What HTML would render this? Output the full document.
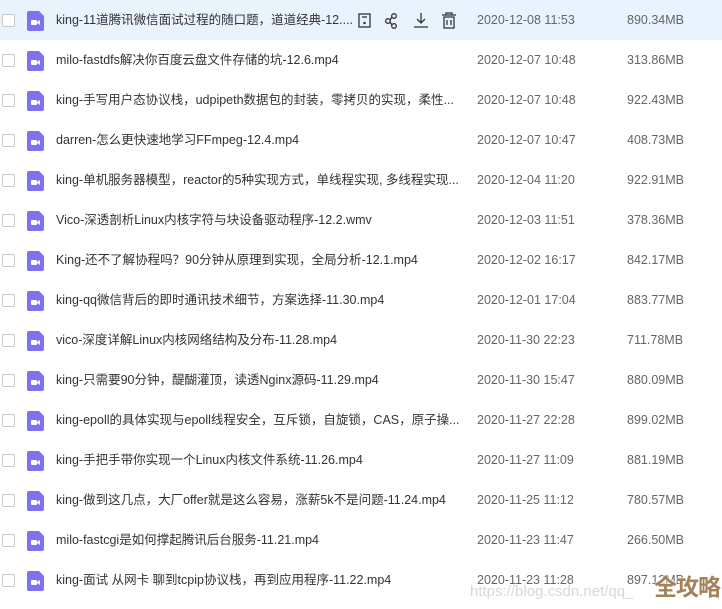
<!DOCTYPE html>
<html><head><meta charset="utf-8"><style>
html,body{margin:0;padding:0;background:#fff;width:722px;height:609px;overflow:hidden;position:relative}
body{font-family:"Liberation Sans","Noto Sans CJK SC",sans-serif;font-size:12.5px;color:#424e67}
.row{position:absolute;left:0;width:722px;height:40px;line-height:40px}
.row.hl{background:#e9f3fd}
.cb{position:absolute;left:2px;top:14px;width:11px;height:11px;border:1px solid #c8c8c8;border-radius:2px;background:#fff}
.ic{position:absolute;left:27px;top:11px;width:17px;height:20px}
.name{position:absolute;left:56px;top:0;height:40px;line-height:40px;white-space:nowrap;color:#333}
.date{position:absolute;left:477px;top:0;height:40px;line-height:40px;color:#666;white-space:nowrap}
.size{position:absolute;left:627px;top:0;height:40px;line-height:40px;color:#666;white-space:nowrap}
.ops{position:absolute;left:357px;top:11px}
</style></head><body>
<div class="row hl" style="top:0">
<div class="cb"></div>
<svg class="ic" viewBox="0 0 17 20"><path d="M2 0h10l5 5v13a2 2 0 0 1-2 2H2a2 2 0 0 1-2-2V2a2 2 0 0 1 2-2z" fill="#7f72f0"/><rect x="4" y="9" width="6" height="5" rx="1" fill="#fff"/><path d="M10 11l3-2v5l-3-2z" fill="#fff"/></svg>
<div class="name">king-11道腾讯微信面试过程的随口题，道道经典-12....</div>
<svg class="ops" width="100" height="20" viewBox="0 0 100 20" fill="none" stroke="#333" stroke-width="1.3">
<rect x="2" y="3" width="11" height="13"/><path d="M5 6h5"/><circle cx="7.5" cy="12" r="0.6" fill="#333"/>
<circle cx="31" cy="10" r="2.3"/><circle cx="37" cy="5" r="2.3"/><circle cx="37" cy="15" r="2.3"/><path d="M33 9l2-3M33 11l2 3"/>
<path d="M64 2v10M60 8l4 4 4-4M57 16h14"/>
<path d="M85 4h14M89 4V2h6v2M87 6h10v11H87zM90 9v5M94 9v5"/>
</svg>
<div class="date">2020-12-08 11:53</div><div class="size">890.34MB</div>
</div>
<div class="row" style="top:40px"><div class="cb"></div><svg class="ic" viewBox="0 0 17 20"><path d="M2 0h10l5 5v13a2 2 0 0 1-2 2H2a2 2 0 0 1-2-2V2a2 2 0 0 1 2-2z" fill="#7f72f0"/><rect x="4" y="9" width="6" height="5" rx="1" fill="#fff"/><path d="M10 11l3-2v5l-3-2z" fill="#fff"/></svg><div class="name">milo-fastdfs解决你百度云盘文件存储的坑-12.6.mp4</div><div class="date">2020-12-07 10:48</div><div class="size">313.86MB</div></div>
<div class="row" style="top:80px"><div class="cb"></div><svg class="ic" viewBox="0 0 17 20"><path d="M2 0h10l5 5v13a2 2 0 0 1-2 2H2a2 2 0 0 1-2-2V2a2 2 0 0 1 2-2z" fill="#7f72f0"/><rect x="4" y="9" width="6" height="5" rx="1" fill="#fff"/><path d="M10 11l3-2v5l-3-2z" fill="#fff"/></svg><div class="name">king-手写用户态协议栈，udpipeth数据包的封装，零拷贝的实现，柔性...</div><div class="date">2020-12-07 10:48</div><div class="size">922.43MB</div></div>
<div class="row" style="top:120px"><div class="cb"></div><svg class="ic" viewBox="0 0 17 20"><path d="M2 0h10l5 5v13a2 2 0 0 1-2 2H2a2 2 0 0 1-2-2V2a2 2 0 0 1 2-2z" fill="#7f72f0"/><rect x="4" y="9" width="6" height="5" rx="1" fill="#fff"/><path d="M10 11l3-2v5l-3-2z" fill="#fff"/></svg><div class="name">darren-怎么更快速地学习FFmpeg-12.4.mp4</div><div class="date">2020-12-07 10:47</div><div class="size">408.73MB</div></div>
<div class="row" style="top:160px"><div class="cb"></div><svg class="ic" viewBox="0 0 17 20"><path d="M2 0h10l5 5v13a2 2 0 0 1-2 2H2a2 2 0 0 1-2-2V2a2 2 0 0 1 2-2z" fill="#7f72f0"/><rect x="4" y="9" width="6" height="5" rx="1" fill="#fff"/><path d="M10 11l3-2v5l-3-2z" fill="#fff"/></svg><div class="name">king-单机服务器模型，reactor的5种实现方式，单线程实现, 多线程实现...</div><div class="date">2020-12-04 11:20</div><div class="size">922.91MB</div></div>
<div class="row" style="top:200px"><div class="cb"></div><svg class="ic" viewBox="0 0 17 20"><path d="M2 0h10l5 5v13a2 2 0 0 1-2 2H2a2 2 0 0 1-2-2V2a2 2 0 0 1 2-2z" fill="#7f72f0"/><rect x="4" y="9" width="6" height="5" rx="1" fill="#fff"/><path d="M10 11l3-2v5l-3-2z" fill="#fff"/></svg><div class="name">Vico-深透剖析Linux内核字符与块设备驱动程序-12.2.wmv</div><div class="date">2020-12-03 11:51</div><div class="size">378.36MB</div></div>
<div class="row" style="top:240px"><div class="cb"></div><svg class="ic" viewBox="0 0 17 20"><path d="M2 0h10l5 5v13a2 2 0 0 1-2 2H2a2 2 0 0 1-2-2V2a2 2 0 0 1 2-2z" fill="#7f72f0"/><rect x="4" y="9" width="6" height="5" rx="1" fill="#fff"/><path d="M10 11l3-2v5l-3-2z" fill="#fff"/></svg><div class="name">King-还不了解协程吗？90分钟从原理到实现，全局分析-12.1.mp4</div><div class="date">2020-12-02 16:17</div><div class="size">842.17MB</div></div>
<div class="row" style="top:280px"><div class="cb"></div><svg class="ic" viewBox="0 0 17 20"><path d="M2 0h10l5 5v13a2 2 0 0 1-2 2H2a2 2 0 0 1-2-2V2a2 2 0 0 1 2-2z" fill="#7f72f0"/><rect x="4" y="9" width="6" height="5" rx="1" fill="#fff"/><path d="M10 11l3-2v5l-3-2z" fill="#fff"/></svg><div class="name">king-qq微信背后的即时通讯技术细节，方案选择-11.30.mp4</div><div class="date">2020-12-01 17:04</div><div class="size">883.77MB</div></div>
<div class="row" style="top:320px"><div class="cb"></div><svg class="ic" viewBox="0 0 17 20"><path d="M2 0h10l5 5v13a2 2 0 0 1-2 2H2a2 2 0 0 1-2-2V2a2 2 0 0 1 2-2z" fill="#7f72f0"/><rect x="4" y="9" width="6" height="5" rx="1" fill="#fff"/><path d="M10 11l3-2v5l-3-2z" fill="#fff"/></svg><div class="name">vico-深度详解Linux内核网络结构及分布-11.28.mp4</div><div class="date">2020-11-30 22:23</div><div class="size">711.78MB</div></div>
<div class="row" style="top:360px"><div class="cb"></div><svg class="ic" viewBox="0 0 17 20"><path d="M2 0h10l5 5v13a2 2 0 0 1-2 2H2a2 2 0 0 1-2-2V2a2 2 0 0 1 2-2z" fill="#7f72f0"/><rect x="4" y="9" width="6" height="5" rx="1" fill="#fff"/><path d="M10 11l3-2v5l-3-2z" fill="#fff"/></svg><div class="name">king-只需要90分钟，醍醐灌顶，读透Nginx源码-11.29.mp4</div><div class="date">2020-11-30 15:47</div><div class="size">880.09MB</div></div>
<div class="row" style="top:400px"><div class="cb"></div><svg class="ic" viewBox="0 0 17 20"><path d="M2 0h10l5 5v13a2 2 0 0 1-2 2H2a2 2 0 0 1-2-2V2a2 2 0 0 1 2-2z" fill="#7f72f0"/><rect x="4" y="9" width="6" height="5" rx="1" fill="#fff"/><path d="M10 11l3-2v5l-3-2z" fill="#fff"/></svg><div class="name">king-epoll的具体实现与epoll线程安全，互斥锁，自旋锁，CAS，原子操...</div><div class="date">2020-11-27 22:28</div><div class="size">899.02MB</div></div>
<div class="row" style="top:440px"><div class="cb"></div><svg class="ic" viewBox="0 0 17 20"><path d="M2 0h10l5 5v13a2 2 0 0 1-2 2H2a2 2 0 0 1-2-2V2a2 2 0 0 1 2-2z" fill="#7f72f0"/><rect x="4" y="9" width="6" height="5" rx="1" fill="#fff"/><path d="M10 11l3-2v5l-3-2z" fill="#fff"/></svg><div class="name">king-手把手带你实现一个Linux内核文件系统-11.26.mp4</div><div class="date">2020-11-27 11:09</div><div class="size">881.19MB</div></div>
<div class="row" style="top:480px"><div class="cb"></div><svg class="ic" viewBox="0 0 17 20"><path d="M2 0h10l5 5v13a2 2 0 0 1-2 2H2a2 2 0 0 1-2-2V2a2 2 0 0 1 2-2z" fill="#7f72f0"/><rect x="4" y="9" width="6" height="5" rx="1" fill="#fff"/><path d="M10 11l3-2v5l-3-2z" fill="#fff"/></svg><div class="name">king-做到这几点，大厂offer就是这么容易，涨薪5k不是问题-11.24.mp4</div><div class="date">2020-11-25 11:12</div><div class="size">780.57MB</div></div>
<div class="row" style="top:520px"><div class="cb"></div><svg class="ic" viewBox="0 0 17 20"><path d="M2 0h10l5 5v13a2 2 0 0 1-2 2H2a2 2 0 0 1-2-2V2a2 2 0 0 1 2-2z" fill="#7f72f0"/><rect x="4" y="9" width="6" height="5" rx="1" fill="#fff"/><path d="M10 11l3-2v5l-3-2z" fill="#fff"/></svg><div class="name">milo-fastcgi是如何撑起腾讯后台服务-11.21.mp4</div><div class="date">2020-11-23 11:47</div><div class="size">266.50MB</div></div>
<div class="row" style="top:560px"><div class="cb"></div><svg class="ic" viewBox="0 0 17 20"><path d="M2 0h10l5 5v13a2 2 0 0 1-2 2H2a2 2 0 0 1-2-2V2a2 2 0 0 1 2-2z" fill="#7f72f0"/><rect x="4" y="9" width="6" height="5" rx="1" fill="#fff"/><path d="M10 11l3-2v5l-3-2z" fill="#fff"/></svg><div class="name">king-面试 从网卡 聊到tcpip协议栈，再到应用程序-11.22.mp4</div><div class="date">2020-11-23 11:28</div><div class="size">897.12MB</div></div>
<div style="position:absolute;left:470px;top:583px;font-size:15px;line-height:18px;color:rgba(200,200,200,0.7);white-space:nowrap">https://blog.csdn.net/qq_</div>
<div style="position:absolute;left:654px;top:570px;font-size:23px;line-height:30px;font-weight:bold;color:#a58158;font-family:'Noto Sans CJK SC',sans-serif;text-shadow:0 0 2px #fff,0 0 2px #fff;white-space:nowrap;letter-spacing:-1px">全攻略</div>
</body></html>
